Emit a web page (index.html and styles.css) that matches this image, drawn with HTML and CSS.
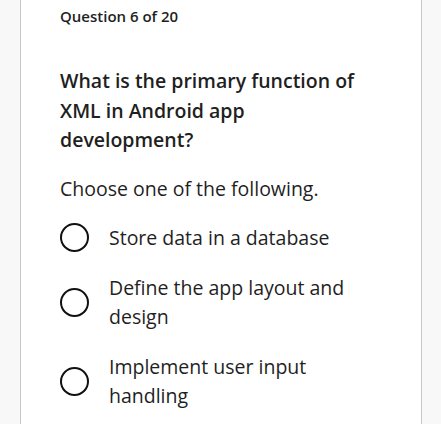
FILE: index.html
```html
<!DOCTYPE html>
<html lang="en">
<head>
<meta charset="utf-8">
<title>Question 6 of 20</title>
<link rel="stylesheet" href="styles.css">
</head>
<body>
<main class="card">
  <p class="counter">Question 6 of 20</p>
  <h1 class="question">What is the primary function of XML in Android app development?</h1>
  <p class="prompt">Choose one of the following.</p>
  <ul class="options">
    <li class="option"><span class="radio"></span><span class="label">Store data in a database</span></li>
    <li class="option"><span class="radio"></span><span class="label">Define the app layout and design</span></li>
    <li class="option"><span class="radio"></span><span class="label">Implement user input handling</span></li>
  </ul>
</main>
</body>
</html>
```

FILE: styles.css
```css
html, body {
  margin: 0;
  padding: 0;
  background: #f8f8f8;
  font-family: "Open Sans", "Liberation Sans", sans-serif;
  color: #1f1f1f;
}

.card {
  margin: 0 19px 0 20px;
  background: #ffffff;
  border-left: 1px solid #c8c8c8;
  border-right: 1px solid #c8c8c8;
  padding: 6px 40px 20px 39px;
  min-height: 424px;
  box-sizing: border-box;
}

.counter {
  margin: 0;
  font-size: 15px;
  font-weight: 600;
  line-height: 20px;
}

.question {
  margin: 40px 0 0;
  font-size: 19.5px;
  font-weight: 600;
  line-height: 29.5px;
}

.prompt {
  margin: 19px 0 0;
  font-size: 19.5px;
  font-weight: 400;
  line-height: 29.5px;
}

.options {
  list-style: none;
  margin: 20px 0 0;
  padding: 0;
  display: flex;
  flex-direction: column;
  gap: 20px;
}

.option {
  display: flex;
  align-items: center;
  gap: 20px;
}

.radio {
  flex: none;
  width: 25px;
  height: 25px;
  border: 2.5px solid #111;
  border-radius: 50%;
}

.label {
  font-size: 19.5px;
  line-height: 29.5px;
}
```
